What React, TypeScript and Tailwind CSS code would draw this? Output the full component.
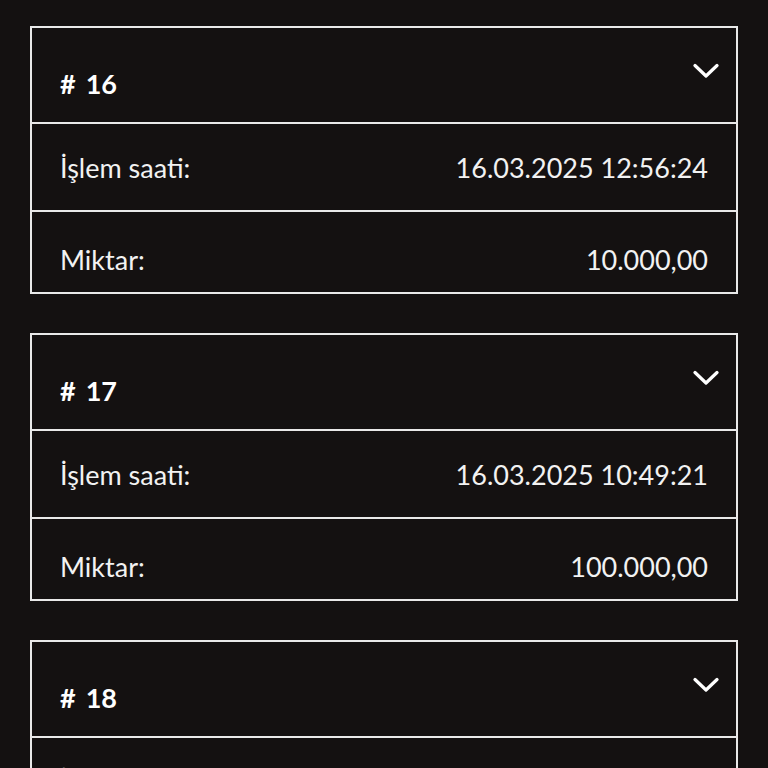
import React from "react";

const items = [
  { id: 16, time: "16.03.2025 12:56:24", amount: "10.000,00" },
  { id: 17, time: "16.03.2025 10:49:21", amount: "100.000,00" },
  { id: 18, time: "16.03.2025 09:12:05", amount: "5.000,00" },
];

function Chevron() {
  return (
    <svg width="26" height="16" viewBox="0 0 26 16" fill="none">
      <path d="M2 2.5 L13 13 L24 2.5" stroke="#ffffff" strokeWidth="3.2" strokeLinecap="round" strokeLinejoin="round" />
    </svg>
  );
}

export default function App() {
  return (
    <div
      className="h-[768px] overflow-hidden bg-[#141111] px-[30px] pt-[26px] flex flex-col gap-[39px] text-[#f2f2f2]"
      style={{ fontFamily: "Lato, 'Noto Sans', sans-serif" }}
    >
      {items.map((it) => (
        <div key={it.id} className="border-2 border-[#e9e9e9] shrink-0">
          <div className="h-[94px] flex justify-between pl-[28px] pr-[17px]">
            <div className="pt-[40px] text-[27px] leading-[32px] font-bold text-white flex">
              <span>#</span>
              <span className="ml-[10px]">{it.id}</span>
            </div>
            <div className="pt-[35px]">
              <Chevron />
            </div>
          </div>
          <div className="h-[88px] border-t-2 border-[#e9e9e9] flex justify-between px-[28px] pt-[28px] text-[27px] leading-[32px]">
            <span>İşlem saati:</span>
            <span>{it.time}</span>
          </div>
          <div className="h-[82px] border-t-2 border-[#e9e9e9] flex justify-between px-[28px] pt-[32px] text-[27px] leading-[32px]">
            <span>Miktar:</span>
            <span>{it.amount}</span>
          </div>
        </div>
      ))}
    </div>
  );
}
